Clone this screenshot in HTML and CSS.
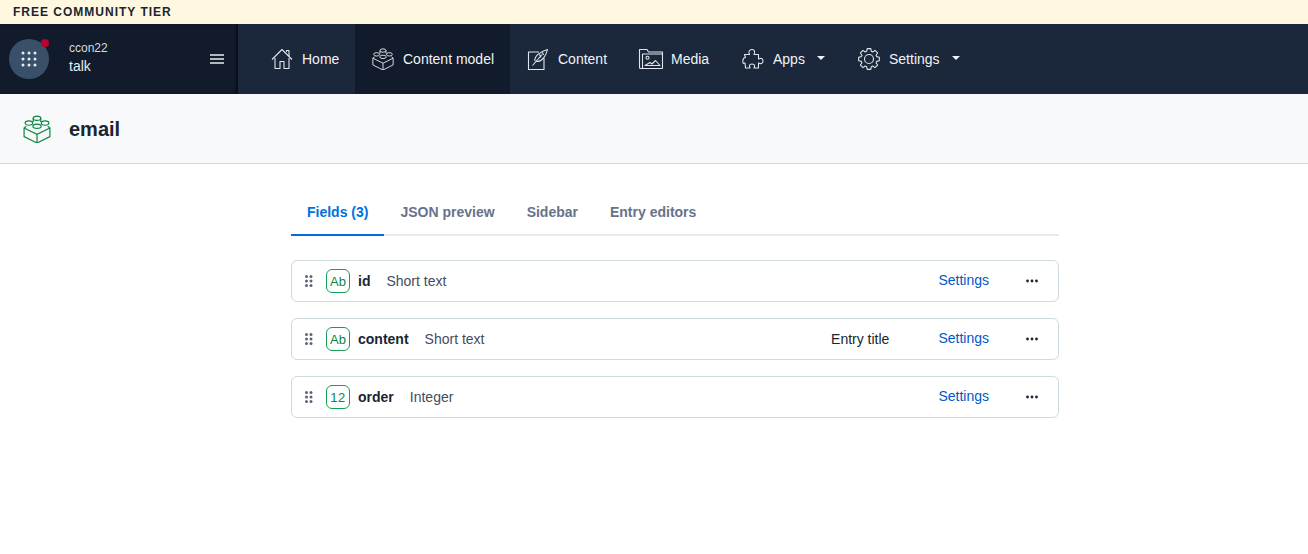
FILE: index.html
```html
<!DOCTYPE html>
<html>
<head>
   <meta charset="utf-8">
   <title>email - Content model</title>
   <link rel="stylesheet" href="styles.css">
</head>
<body>

   <div class="tier-banner">FREE COMMUNITY TIER</div>

   <!-- top navigation -->
   <nav class="topnav">
      <div class="space-box">
         <div class="space-btn">
            <svg width="16" height="16" viewBox="0 0 16 16" fill="#e8edf2">
               <circle cx="2" cy="2" r="1.5"/><circle cx="8" cy="2" r="1.5"/><circle cx="14" cy="2" r="1.5"/>
               <circle cx="2" cy="8" r="1.5"/><circle cx="8" cy="8" r="1.5"/><circle cx="14" cy="8" r="1.5"/>
               <circle cx="2" cy="14" r="1.5"/><circle cx="8" cy="14" r="1.5"/><circle cx="14" cy="14" r="1.5"/>
            </svg>
            <span class="notify-dot"></span>
         </div>
         <div class="space-names">
            <div class="org-name">ccon22</div>
            <div class="space-name">talk</div>
         </div>
         <svg class="burger" width="14" height="10" viewBox="0 0 14 10" stroke="#e8edf2" stroke-width="1.3">
            <path d="M0 1h14M0 5h14M0 9h14"/>
         </svg>
      </div>

      <div class="nav-items">
         <a class="nav-item nav-home">
            <svg class="nav-icon" width="22" height="22" viewBox="0 0 22 22">
               <path d="M1 11.5 11 1.5l10 10M15.5 4V2.5H18V8M4 10v10.500h5v-7h4v7h5V10"/>
            </svg>
            Home
         </a>
         <a class="nav-item nav-active">
            <svg class="nav-icon" width="22" height="22" viewBox="0 0 26 26">
               <use href="#brick"/>
            </svg>
            Content model
         </a>
         <a class="nav-item nav-content">
            <svg class="nav-icon" width="22" height="22" viewBox="0 0 22 22">
               <path d="M12 4H1.5v17.500H17V10"/>
               <path d="M5.500 17.500 15 6.500M8 13c-1-4 4-9 12.500-11.500C19 8 15 14 9.500 13.500M12.500 6.500l1.500 3M15.500 4.500l1 2.500"/>
            </svg>
            Content
         </a>
         <a class="nav-item nav-media">
            <svg class="nav-icon nav-icon-wide" width="24" height="20" viewBox="0 0 24 20">
               <path d="M4.500 19.500H1.500a1 1 0 0 1-1-1V.5h7.500l1.500 2.500h14v16a.5.5 0 0 1-.5.5H4.500a1 1 0 0 1-1-1V5h20"/>
               <circle cx="8.500" cy="8.800" r="1.500"/>
               <path d="M6 16.500h15l-4.500-5-3.500 3.500-2-1.500z"/>
            </svg>
            Media
         </a>
         <a class="nav-item nav-apps">
            <svg class="nav-icon" width="22" height="22" viewBox="0 0 22 22">
               <path d="M10 1.500c2 0 3 1.500 2.500 3.500l-.5 1.500h4.500v4.500l1.500-.5c2-.5 3 .5 3 2.500s-1.500 3-3 2.500l-1.500-.5v5h-4.500l.5-1.500c.5-1.500-1-2.500-2.500-2.500s-3 1-2.500 2.500l.5 1.500H3.500l-.5-5-1.500.5C.5 15 .5 11.500 2 10l1.500-.5L2.500 6.500h5l-.5-1.500C6.500 3 8 1.500 10 1.500z"/>
            </svg>
            Apps
            <span class="caret"></span>
         </a>
         <a class="nav-item nav-settings">
            <svg class="nav-icon" width="22" height="22" viewBox="0 0 22 22">
               <circle cx="11" cy="11" r="4.500"/>
               <path d="M8.660 3.350 9.180.66h3.640l.52 2.690 1.410.59 2.270-1.540 2.580 2.580-1.540 2.270.59 1.410 2.690.52v3.640l-2.690.52-.59 1.410 1.540 2.270-2.580 2.580-2.270-1.540-1.410.59-.52 2.690H9.180l-.52-2.690-1.410-.59-2.270 1.540-2.580-2.580 1.540-2.270-.59-1.410-2.690-.52V9.180l2.690-.52.59-1.410L2.400 4.980 4.980 2.400l2.270 1.540z"/>
            </svg>
            Settings
            <span class="caret"></span>
         </a>
      </div>
   </nav>

   <header class="page-head">
      <svg class="head-icon" width="28" height="28" viewBox="0 0 26 26">
         <use href="#brick"/>
      </svg>
      <h1>email</h1>
   </header>

   <main class="workbench">
      <div class="tabs">
         <a class="tab tab-active">Fields (3)</a>
         <a class="tab">JSON preview</a>
         <a class="tab">Sidebar</a>
         <a class="tab">Entry editors</a>
      </div>

      <div class="field-row">
         <svg class="drag" width="8" height="12" viewBox="0 0 8 12"><use href="#dots"/></svg>
         <span class="type-badge">Ab</span>
         <b class="field-name">id</b>
         <span class="field-type">Short text</span>
         <a class="field-settings">Settings</a>
         <svg class="more" width="12" height="4" viewBox="0 0 12 4"><use href="#more"/></svg>
      </div>

      <div class="field-row">
         <svg class="drag" width="8" height="12" viewBox="0 0 8 12"><use href="#dots"/></svg>
         <span class="type-badge">Ab</span>
         <b class="field-name">content</b>
         <span class="field-type">Short text</span>
         <span class="field-title">Entry title</span>
         <a class="field-settings">Settings</a>
         <svg class="more" width="12" height="4" viewBox="0 0 12 4"><use href="#more"/></svg>
      </div>

      <div class="field-row">
         <svg class="drag" width="8" height="12" viewBox="0 0 8 12"><use href="#dots"/></svg>
         <span class="type-badge type-num">12</span>
         <b class="field-name">order</b>
         <span class="field-type">Integer</span>
         <a class="field-settings">Settings</a>
         <svg class="more" width="12" height="4" viewBox="0 0 12 4"><use href="#more"/></svg>
      </div>
   </main>

   <!-- shared shapes -->
   <svg class="defs" width="0" height="0">
      <defs>
         <symbol id="brick" viewBox="0 0 26 26">
            <path d="M3 10.500 1 12v8l12 6 12-6v-8l-2-1.500M1 12l12 6 12-6M13 18v8"/>
            <ellipse cx="13" cy="10.500" rx="3.800" ry="2"/>
            <ellipse cx="5.500" cy="7.500" rx="3.500" ry="2"/>
            <ellipse cx="20.500" cy="7.500" rx="3.500" ry="2"/>
            <ellipse cx="13" cy="3" rx="3.500" ry="2"/>
            <path d="M9.500 3v3.500M16.500 3v3.500"/>
         </symbol>
         <symbol id="dots" viewBox="0 0 8 12">
            <circle cx="1.500" cy="1.500" r="1.500"/><circle cx="6" cy="1.500" r="1.500"/>
            <circle cx="1.500" cy="6" r="1.500"/><circle cx="6" cy="6" r="1.500"/>
            <circle cx="1.500" cy="10.500" r="1.500"/><circle cx="6" cy="10.500" r="1.500"/>
         </symbol>
         <symbol id="more" viewBox="0 0 12 4">
            <circle cx="1.500" cy="2" r="1.400"/><circle cx="6" cy="2" r="1.400"/><circle cx="10.500" cy="2" r="1.400"/>
         </symbol>
      </defs>
   </svg>

</body>
</html>
```

FILE: styles.css
```css
* {
   box-sizing: border-box;
}
body {
   margin: 0;
   background: #fff;
   font-family: "Liberation Sans", Arial, sans-serif;
   font-size: 14px;
   color: #192532;
}
.defs {
   position: absolute;
}

.tier-banner {
   height: 24px;
   padding-left: 13px;
   background: #fff8e0;
   font-size: 12px;
   font-weight: bold;
   letter-spacing: 1px;
   line-height: 25px;
   color: #192532;
}

.topnav {
   display: flex;
   height: 70px;
   background: #1b273a;
   color: #fff;
}
.space-box {
   display: flex;
   align-items: center;
   width: 238px;
   padding-left: 9px;
   background: #111b2b;
   box-shadow: inset -3px 0 3px -1px rgba(0, 0, 0, .5);
}
.space-btn {
   position: relative;
   display: flex;
   align-items: center;
   justify-content: center;
   width: 40px;
   height: 40px;
   border-radius: 50%;
   background: #3a5068;
}
.notify-dot {
   position: absolute;
   top: 0;
   right: 0;
   width: 8px;
   height: 8px;
   border-radius: 50%;
   background: #bd002a;
}
.space-names {
   width: 141px;
   margin-left: 20px;
}
.org-name {
   font-size: 12px;
   line-height: 16px;
   margin-bottom: 2px;
   color: #d3dce0;
}
.space-name {
   font-size: 14px;
   line-height: 17px;
   margin-bottom: 3px;
   color: #e8edf2;
}

.nav-items {
   display: flex;
}
.nav-item {
   display: flex;
   align-items: center;
   height: 70px;
   color: #f0f3f7;
}
.nav-icon {
   fill: none;
   stroke: #dfe5ea;
   stroke-width: 1.1;
   stroke-linejoin: round;
   margin-right: 9px;
   overflow: visible;
}
.nav-home {
   width: 117px;
   padding-left: 33px;
}
.nav-active {
   width: 155px;
   padding-left: 17px;
   background: #111b2b;
}
.nav-content {
   width: 113px;
   padding-left: 17px;
}
.nav-media {
   width: 102px;
   padding-left: 16px;
}
.nav-icon-wide {
   margin-right: 8px;
}
.nav-apps {
   width: 116px;
   padding-left: 17px;
}
.nav-settings {
   padding-left: 17px;
}
.caret {
   width: 0;
   height: 0;
   margin: 0 0 2px 12px;
   border: 4.500px solid transparent;
   border-top: 4px solid #f0f3f7;
   border-bottom: 0;
}

.page-head {
   display: flex;
   align-items: center;
   height: 70px;
   padding-left: 23px;
   background: #f7f9fa;
   border-bottom: 1px solid #d3dce0;
}
.head-icon {
   fill: none;
   stroke: #0e8542;
   stroke-width: 1.100;
   margin-right: 18px;
}
h1 {
   margin: 2px 0 0;
   font-size: 20px;
   font-weight: bold;
   color: #192532;
}

.workbench {
   width: 768px;
   margin: 28px 0 0 291px;
}
.tabs {
   display: flex;
   height: 44px;
   margin-bottom: 24px;
   border-bottom: 2px solid #e7ebee;
}
.tab {
   height: 44px;
   padding: 12px 16px 0;
   font-weight: bold;
   line-height: 17px;
   color: #67728a;
}
.tab-active {
   color: #0070e0;
   border-bottom: 2px solid #0070e0;
}

.field-row {
   display: flex;
   align-items: center;
   height: 42px;
   margin-bottom: 16px;
   padding: 0 20px 0 13px;
   border: 1px solid #cfd9e0;
   border-radius: 6px;
}
.drag {
   fill: #5a6579;
   margin-right: 13px;
}
.type-badge {
   width: 24px;
   height: 24px;
   margin-right: 8px;
   border: 1px solid #15a05a;
   border-radius: 6px;
   font-size: 13px;
   line-height: 24px;
   text-align: center;
   color: #0e8542;
}
.type-num {
   letter-spacing: .5px;
}
.field-name {
   margin-right: 16px;
   color: #192532;
}
.field-type {
   color: #414d63;
}
.field-title {
   margin-left: auto;
   color: #192532;
}
.field-settings {
   margin-left: auto;
   margin-right: 37px;
   margin-top: -2px;
   color: #0059c8;
}
.field-title + .field-settings {
   margin-left: 49px;
}
.more {
   fill: #192532;
}
```
